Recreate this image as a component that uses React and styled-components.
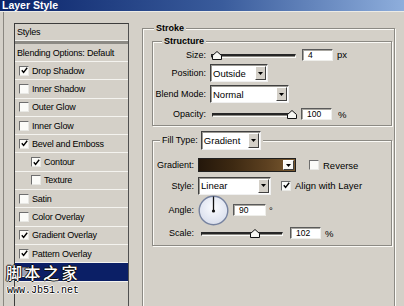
import React from 'react'
import styled, { createGlobalStyle } from 'styled-components'

const GlobalStyle = createGlobalStyle`
  html, body {
    margin: 0;
    padding: 0;
    background: #d4d0c8;
    overflow: hidden;
  }
  body {
    font-family: "Liberation Sans", Arial, sans-serif;
    font-size: 9px;
    color: #000;
  }
`

const gray = '#d4d0c8'

const Window = styled.div`
  position: relative;
  width: 404px;
  height: 306px;
  overflow: hidden;
  background: ${gray};
`

const TitleBar = styled.div`
  height: 11px;
  line-height: 11px;
  padding-left: 2px;
  background: linear-gradient(to right, #0a246a 0%, #3a5c9c 55%, #8eaedc 100%);
  color: #fff;
  font-weight: bold;
  font-size: 10.5px;
  border-bottom: 1px solid #ecebe6;
`

const Body = styled.div`
  display: flex;
  height: 294px;
`

const StylesPane = styled.div`
  width: 136px;
  margin-left: 3px;
  padding: 11px 0 0 10px;
  border-left: 1px solid #8a8780;
  box-sizing: border-box;
`

const StyleList = styled.div`
  width: 115px;
  height: 300px;
  border: 1px solid #3c3c3c;
  border-right-color: #505050;
  box-sizing: border-box;
`

const ListRow = styled.div`
  display: flex;
  align-items: center;
  gap: 3px;
  height: ${(p) => p.$h || 18.3}px;
  box-sizing: border-box;
  padding-left: ${(p) => (p.$indent ? 16 : p.$plain ? 2 : 4)}px;
  border-bottom: ${(p) => (p.$thick ? '3px solid #8c8a84' : '1px solid #f4f3ef')};
  background: ${(p) => (p.$selected ? '#0b1f66' : 'transparent')};
  color: ${(p) => (p.$selected ? '#fff' : '#000')};
  letter-spacing: -0.2px;
  white-space: nowrap;
`

const Box = styled.span`
  display: inline-flex;
  align-items: center;
  justify-content: center;
  width: 8px;
  height: 8px;
  flex: none;
  background: ${(p) => (p.$dim ? '#9fa3b8' : '#fbfbf8')};
  border-top: 1px solid #6e6e6e;
  border-left: 1px solid #6e6e6e;
  border-bottom: 1px solid #e8e8e4;
  border-right: 1px solid #e8e8e4;
`

const CheckBox = ({ checked, dim }) => (
  <Box $dim={dim}>
    {checked && (
      <svg width="7" height="7" viewBox="0 0 7 7">
        <polyline points="0.8,3.2 2.6,5.4 6.2,0.8" fill="none" stroke="#000" strokeWidth="1.4" />
      </svg>
    )}
  </Box>
)

const RightPane = styled.div`
  flex: 1;
  padding-top: 11px;
`

const GroupBox = styled.fieldset`
  margin: ${(p) => p.$m || '0'};
  padding: 0;
  min-width: 0;
  border: 1px solid #8c8a84;
  box-shadow: inset 1px 1px 0 #fbfaf6, 1px 1px 0 #fbfaf6;
  box-sizing: border-box;
  height: ${(p) => (p.$h ? `${p.$h}px` : 'auto')};
`

const Caption = styled.legend`
  display: flex;
  align-items: center;
  gap: 3px;
  margin-left: ${(p) => p.$ml || 9}px;
  padding: 0 2px;
  line-height: 11px;
  font-weight: ${(p) => (p.$bold ? 'bold' : 'normal')};
  background: ${gray};
`

const Content = styled.div`
  padding: ${(p) => p.$pad || '0'};
`

const FieldRow = styled.div`
  display: flex;
  align-items: center;
  gap: ${(p) => p.$gap || 4}px;
  height: ${(p) => p.$h}px;
`

const Label = styled.span`
  width: ${(p) => p.$w}px;
  text-align: right;
  flex: none;
  white-space: nowrap;
`

const SelectBox = styled.div`
  display: flex;
  align-items: stretch;
  width: ${(p) => p.$w}px;
  height: ${(p) => p.$hh || 18}px;
  box-sizing: border-box;
  background: #fff;
  border-top: 1px solid #404040;
  border-left: 1px solid #404040;
  border-bottom: 1px solid #f0f0f0;
  border-right: 1px solid #f0f0f0;
  box-shadow: inset 1px 1px 0 #9c9a94;
`

const SelectText = styled.span`
  flex: 1;
  display: flex;
  align-items: center;
  padding-left: 2px;
  white-space: nowrap;
  font-size: 9.5px;
`

const DropButton = styled.span`
  display: flex;
  align-items: center;
  justify-content: center;
  width: 11px;
  margin: 1px 1px 1px 0;
  background: ${(p) => (p.$white ? '#f8f8f6' : gray)};
  border-top: 1px solid #fff;
  border-left: 1px solid #fff;
  border-right: 1px solid #404040;
  border-bottom: 1px solid #404040;
  box-sizing: border-box;
`

const Arrow = () => (
  <svg width="5" height="3" viewBox="0 0 5 3">
    <polygon points="0,0 5,0 2.5,3" fill="#000" />
  </svg>
)

const Select = ({ w, value }) => (
  <SelectBox $w={w}>
    <SelectText>{value}</SelectText>
    <DropButton>
      <Arrow />
    </DropButton>
  </SelectBox>
)

const TextInput = styled.div`
  width: ${(p) => p.$w || 31}px;
  height: 12px;
  box-sizing: border-box;
  background: #fff;
  border-top: 1px solid #5a5a5a;
  border-left: 1px solid #5a5a5a;
  border-bottom: 1px solid #eeeeea;
  border-right: 1px solid #eeeeea;
  box-shadow: inset 1px 1px 0 #a8a6a0;
  padding-left: 5px;
  line-height: 10px;
  font-size: 8.5px;
  flex: none;
`

const Unit = styled.span`
  margin-left: ${(p) => p.$ml || 0}px;
  font-size: 9.5px;
`

const SliderWrap = styled.div`
  position: relative;
  width: ${(p) => p.$w}px;
  height: 10px;
  margin-left: ${(p) => p.$ml || 0}px;
  flex: none;
`

const Track = styled.div`
  position: absolute;
  left: 0;
  right: 0;
  top: 4px;
  height: 4px;
  box-sizing: border-box;
  border-top: 2px solid #262626;
  border-left: 1px solid #262626;
  border-bottom: 1px solid #fbfbf8;
  border-right: 1px solid #fbfbf8;
  background: #8c8a84;
`

const Thumb = styled.svg`
  position: absolute;
  top: 1px;
`

const Slider = ({ w, ml, pos }) => (
  <SliderWrap $w={w} $ml={ml}>
    <Track />
    <Thumb width="10" height="9" viewBox="0 0 10 9" style={{ left: pos }}>
      <polygon points="5,0.5 9.5,4.5 9.5,8.5 0.5,8.5 0.5,4.5" fill="#f6f6f2" stroke="#111" strokeWidth="1" />
    </Thumb>
  </SliderWrap>
)

const GradientSwatch = styled.div`
  display: flex;
  width: 98px;
  height: 14px;
  box-sizing: border-box;
  border: 1px solid #202020;
  background: linear-gradient(to right, #24170b 0%, #3d2912 35%, #5c4020 70%, #7a5a30 100%);
`

const SwatchFill = styled.span`
  flex: 1;
`

const CheckLabel = styled.span`
  display: inline-flex;
  align-items: center;
  gap: 4px;
  margin-left: ${(p) => p.$ml || 0}px;
  font-size: 9.5px;
  white-space: nowrap;
`

const AngleDial = () => (
  <svg width="31" height="31" viewBox="0 0 31 31" style={{ flex: 'none' }}>
    <defs>
      <radialGradient id="dial" cx="50%" cy="40%" r="60%">
        <stop offset="0%" stopColor="#fbfcff" />
        <stop offset="100%" stopColor="#d9deec" />
      </radialGradient>
    </defs>
    <circle cx="15.5" cy="15.5" r="14.3" fill="url(#dial)" stroke="#76829f" strokeWidth="1.4" />
    <line x1="15.5" y1="15.5" x2="15.5" y2="1.5" stroke="#111" strokeWidth="1.3" />
    <circle cx="15.5" cy="16" r="1.6" fill="#111" />
  </svg>
)

const Watermark = styled.div`
  position: absolute;
  left: 6px;
  top: 260px;
  display: flex;
  flex-direction: column;
  gap: 1px;
`

const WaterCn = styled.span`
  font-family: "Noto Sans CJK SC", sans-serif;
  font-size: 16px;
  font-weight: 500;
  letter-spacing: 2.5px;
  color: #fff;
  line-height: 24px;
  text-shadow: 1px 0 0 #111, -1px 0 0 #111, 0 1px 0 #111, 0 -1px 0 #111;
`

const WaterUrl = styled.span`
  font-family: "Liberation Mono", monospace;
  font-size: 10px;
  color: #000;
  padding-left: 1px;
  text-shadow: 1px 0 0 #fff, -1px 0 0 #fff, 0 1px 0 #fff, 0 -1px 0 #fff;
`

const effects = [
  { label: 'Drop Shadow', checked: true },
  { label: 'Inner Shadow' },
  { label: 'Outer Glow' },
  { label: 'Inner Glow' },
  { label: 'Bevel and Emboss', checked: true },
  { label: 'Contour', checked: true, indent: true },
  { label: 'Texture', indent: true },
  { label: 'Satin' },
  { label: 'Color Overlay' },
  { label: 'Gradient Overlay', checked: true },
  { label: 'Pattern Overlay', checked: true },
]

export default function App() {
  return (
    <Window>
      <GlobalStyle />
      <TitleBar>Layer Style</TitleBar>
      <Body>
        <StylesPane>
          <StyleList>
            <ListRow $plain $h={17}>Styles</ListRow>
            <ListRow $plain $thick $h={3} />
            <ListRow $plain $h={18}>Blending Options: Default</ListRow>
            {effects.map((e) => (
              <ListRow key={e.label} $indent={e.indent}>
                <CheckBox checked={e.checked} />
                <span>{e.label}</span>
              </ListRow>
            ))}
            <ListRow $selected $h={19}>
              <CheckBox dim />
            </ListRow>
          </StyleList>
        </StylesPane>

        <RightPane>
          <GroupBox $m="0 9px 0 3px" $h={320}>
            <Caption $bold $ml={11}>Stroke</Caption>
            <Content $pad="2px 2px 0 9px">
              <GroupBox>
                <Caption $bold $ml={9}>Structure</Caption>
                <Content $pad="0 0 1px 0">
                  <FieldRow $h={15}>
                    <Label $w={53}>Size:</Label>
                    <Slider w={85} ml={1} pos={1} />
                    <TextInput style={{ marginLeft: 2 }}>4</TextInput>
                    <Unit>px</Unit>
                  </FieldRow>
                  <FieldRow $h={22}>
                    <Label $w={53}>Position:</Label>
                    <Select w={58} value="Outside" />
                  </FieldRow>
                  <FieldRow $h={20}>
                    <Label $w={53}>Blend Mode:</Label>
                    <Select w={79} value="Normal" />
                  </FieldRow>
                  <FieldRow $h={20}>
                    <Label $w={53}>Opacity:</Label>
                    <Slider w={84} ml={2} pos={75} />
                    <TextInput style={{ marginLeft: 1 }}>100</TextInput>
                    <Unit $ml={2}>%</Unit>
                  </FieldRow>
                </Content>
              </GroupBox>

              <GroupBox $m="5px 0 0 0">
                <Caption $ml={7}>
                  <span>Fill Type:</span>
                  <SelectBox $w={60} $hh={19}>
                    <SelectText>Gradient</SelectText>
                    <DropButton>
                      <Arrow />
                    </DropButton>
                  </SelectBox>
                </Caption>
                <Content $pad="5px 0 3px 0">
                  <FieldRow $h={20}>
                    <Label $w={41}>Gradient:</Label>
                    <GradientSwatch>
                      <SwatchFill />
                      <DropButton $white>
                        <Arrow />
                      </DropButton>
                    </GradientSwatch>
                    <CheckLabel $ml={9}>
                      <CheckBox />
                      Reverse
                    </CheckLabel>
                  </FieldRow>
                  <FieldRow $h={21}>
                    <Label $w={41}>Style:</Label>
                    <Select w={73} value="Linear" />
                    <CheckLabel $ml={6}>
                      <CheckBox checked />
                      Align with Layer
                    </CheckLabel>
                  </FieldRow>
                  <FieldRow $h={28}>
                    <Label $w={41}>Angle:</Label>
                    <AngleDial />
                    <TextInput $w={33}>90</TextInput>
                    <Unit $ml={-1}>°</Unit>
                  </FieldRow>
                  <FieldRow $h={18}>
                    <Label $w={41}>Scale:</Label>
                    <Slider w={82} ml={3} pos={49} />
                    <TextInput style={{ marginLeft: 3 }}>102</TextInput>
                    <Unit>%</Unit>
                  </FieldRow>
                </Content>
              </GroupBox>
            </Content>
          </GroupBox>
        </RightPane>
      </Body>
      <Watermark>
        <WaterCn>脚本之家</WaterCn>
        <WaterUrl>www.Jb51.net</WaterUrl>
      </Watermark>
    </Window>
  )
}
